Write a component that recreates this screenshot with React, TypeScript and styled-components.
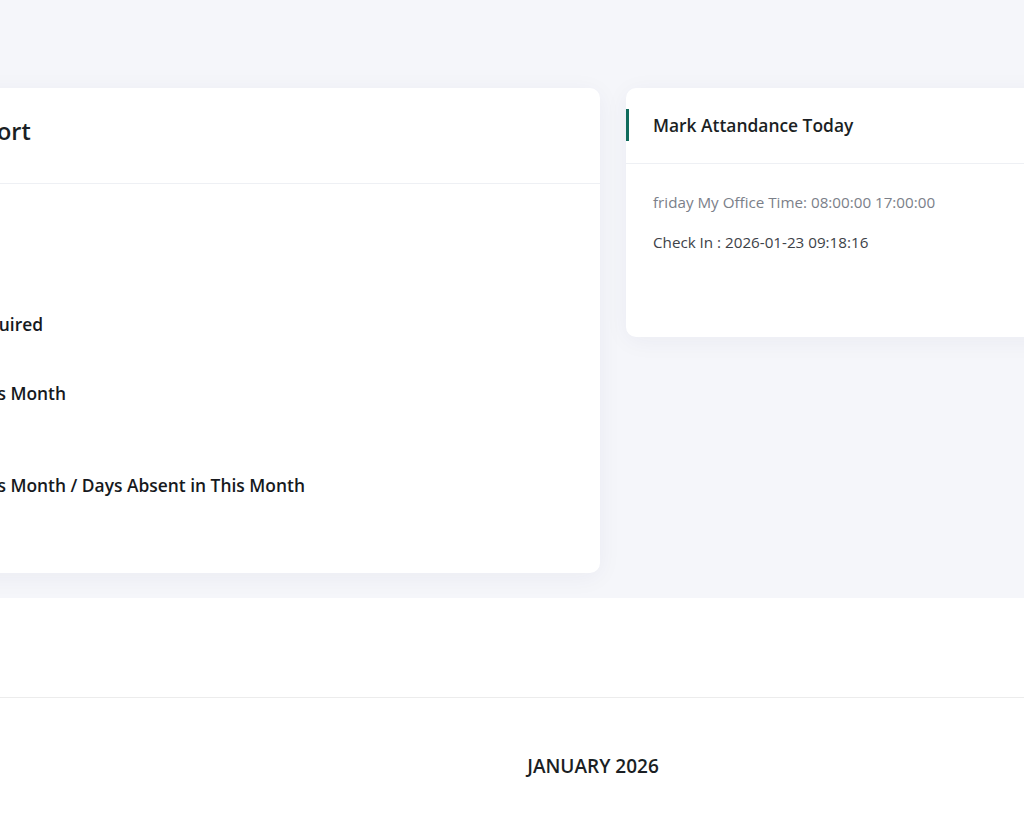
import React from "react";
import styled, { createGlobalStyle } from "styled-components";

const GlobalStyle = createGlobalStyle`
  html, body {
    margin: 0;
    padding: 0;
    overflow: hidden;
    background: #ffffff;
    font-family: "Open Sans", "Noto Sans", sans-serif;
    color: #212529;
  }
`;

const Viewport = styled.div`
  width: 100%;
  overflow: hidden;
`;

const Page = styled.div`
  width: 1614px;
  margin-left: -214px;
`;

const TopSection = styled.section`
  background: #f5f6fa;
  padding: 88px 24px 25px;
`;

const Row = styled.div`
  display: flex;
  align-items: flex-start;
  gap: 26px;
`;

const Card = styled.div<{ $width: number; $height: number }>`
  flex: 0 0 ${(p) => p.$width}px;
  height: ${(p) => p.$height}px;
  background: #ffffff;
  border-radius: 10px;
  box-shadow: 0 4px 24px rgba(30, 40, 90, 0.05);
  display: flex;
  flex-direction: column;
`;

const CardHeader = styled.div<{ $height: number; $lift?: number }>`
  height: ${(p) => p.$height}px;
  display: flex;
  align-items: center;
  padding: 0 27px ${(p) => p.$lift ?? 0}px;
  border-bottom: 1px solid #eef0f4;
  box-sizing: border-box;
`;

const ReportTitle = styled.h3`
  margin: 0;
  font-size: 23.5px;
  font-weight: 600;
  line-height: 32px;
  color: #1b1f24;
`;

const AttendanceTitle = styled.h4`
  margin: 0 0 0 -27px;
  padding-left: 24px;
  border-left: 3px solid #0f6b5c;
  line-height: 32px;
  font-size: 17.4px;
  font-weight: 600;
  color: #1b1f24;
`;

const CardBody = styled.div`
  padding: 27px;
  display: flex;
  flex-direction: column;
`;

const StatLabel = styled.div<{ $top: number }>`
  margin-top: ${(p) => p.$top}px;
  font-size: 17.4px;
  font-weight: 600;
  line-height: 24px;
  color: #16191d;
  white-space: nowrap;
`;

const InfoLine = styled.p<{ $muted?: boolean }>`
  margin: 0 0 17px;
  font-size: 15.2px;
  line-height: 23px;
  color: ${(p) => (p.$muted ? "#7b8089" : "#3d4248")};
`;

const CalendarSection = styled.section`
  background: #ffffff;
`;

const CalendarToolbar = styled.div`
  height: 99px;
  border-bottom: 1px solid #ececec;
`;

const CalendarTitle = styled.h2`
  margin: 0;
  padding-top: 55px;
  text-align: center;
  font-size: 19px;
  font-weight: 600;
  line-height: 26px;
  color: #1b1f24;
`;

export default function App() {
  return (
    <Viewport>
      <GlobalStyle />
      <Page>
        <TopSection>
          <Row>
            <Card $width={790} $height={485}>
              <CardHeader $height={96} $lift={10}>
                <ReportTitle>Employee Report</ReportTitle>
              </CardHeader>
              <CardBody>
                <StatLabel $top={101}>Working Hours Required</StatLabel>
                <StatLabel $top={45}>Days Present in This Month</StatLabel>
                <StatLabel $top={68}>
                  Days Present in This Month / Days Absent in This Month
                </StatLabel>
              </CardBody>
            </Card>
            <Card $width={750} $height={249}>
              <CardHeader $height={76} $lift={2}>
                <AttendanceTitle>Mark Attandance Today</AttendanceTitle>
              </CardHeader>
              <CardBody>
                <InfoLine $muted>friday My Office Time: 08:00:00 17:00:00</InfoLine>
                <InfoLine>Check In : 2026-01-23 09:18:16</InfoLine>
              </CardBody>
            </Card>
          </Row>
        </TopSection>
        <CalendarSection>
          <CalendarToolbar />
          <CalendarTitle>JANUARY 2026</CalendarTitle>
        </CalendarSection>
      </Page>
    </Viewport>
  );
}
